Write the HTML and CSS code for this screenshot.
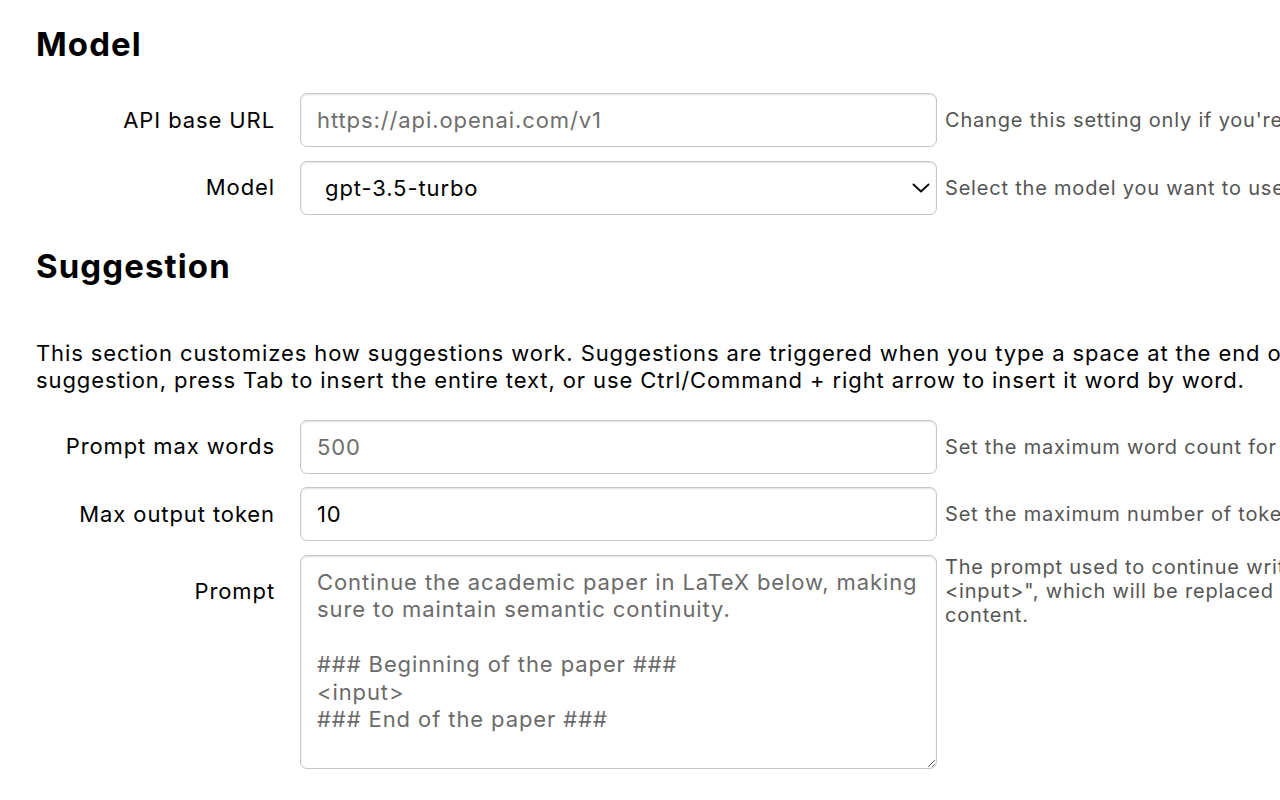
FILE: index.html
```html
<!DOCTYPE html>
<html lang="en">
<head>
<meta charset="utf-8">
<title>Settings</title>
<link rel="stylesheet" href="styles.css">
</head>
<body>
<main class="page">
  <section class="section">
    <h2 class="section-title">Model</h2>
    <div class="fields">
      <div class="field-row">
        <label class="field-label" for="api-base">API base URL</label>
        <input class="control" id="api-base" type="text" placeholder="https://api.openai.com/v1">
        <div class="field-help">Change this setting only if you're using a custom API endpoint.</div>
      </div>
      <div class="field-row">
        <label class="field-label" for="model">Model</label>
        <div class="select-wrap">
          <select class="control control-select" id="model">
            <option>gpt-3.5-turbo</option>
            <option>gpt-4</option>
          </select>
          <svg class="chevron" width="18" height="10" viewBox="0 0 18 10" aria-hidden="true"><path d="M1.5 1.5 L9 8.5 L16.5 1.5" fill="none" stroke="#111" stroke-width="2" stroke-linecap="round" stroke-linejoin="round"/></svg>
        </div>
        <div class="field-help">Select the model you want to use for suggestions.</div>
      </div>
    </div>
  </section>

  <section class="section">
    <h2 class="section-title section-title-second">Suggestion</h2>
    <p class="section-intro">This section customizes how suggestions work. Suggestions are triggered when you type a space at the end of a sentence. To accept a suggestion, press Tab to insert the entire text, or use Ctrl/Command + right arrow to insert it word by word.</p>
    <div class="fields">
      <div class="field-row">
        <label class="field-label" for="max-words">Prompt max words</label>
        <input class="control" id="max-words" type="text" placeholder="500">
        <div class="field-help">Set the maximum word count for suggestion prompts.</div>
      </div>
      <div class="field-row">
        <label class="field-label" for="max-token">Max output token</label>
        <input class="control" id="max-token" type="text" value="10">
        <div class="field-help">Set the maximum number of tokens to generate.</div>
      </div>
      <div class="field-row field-row-top">
        <label class="field-label field-label-top" for="prompt">Prompt</label>
        <textarea class="control control-area" id="prompt">Continue the academic paper in LaTeX below, making sure to maintain semantic continuity.

### Beginning of the paper ###
&lt;input&gt;
### End of the paper ###</textarea>
        <div class="field-help field-help-top">The prompt used to continue writing, with "<br>&lt;input&gt;", which will be replaced by the current<br>content.</div>
      </div>
    </div>
  </section>
</main>
</body>
</html>
```

FILE: styles.css
```css
html, body {
  margin: 0;
  padding: 0;
  background: #ffffff;
  overflow-x: hidden;
}

body {
  font-family: Inter, "Noto Sans", "Liberation Sans", sans-serif;
  color: #000000;
  font-size: 22px;
  letter-spacing: 0.9px;
}

.page {
  padding: 0 36px;
  width: 1800px;
}

.section-title {
  font-size: 33px;
  font-weight: 700;
  line-height: 38px;
  margin: 25px 0 0 0;
  letter-spacing: 1.1px;
}

.section-title-second {
  margin-top: 32px;
}

.section-intro {
  margin: 55px 0 0 0;
  line-height: 27px;
  width: 1540px;
  font-size: 22px;
}

.fields {
  display: flex;
  flex-direction: column;
  gap: 13.5px;
  margin-top: 30px;
}

.section-intro + .fields {
  margin-top: 26px;
}

.field-row {
  display: grid;
  grid-template-columns: 239px 637px max-content;
  column-gap: 25px;
  align-items: center;
}

.field-label {
  text-align: right;
  font-size: 22px;
  line-height: 27px;
}

.field-label-top {
  align-self: start;
  padding-top: 23px;
}

.control {
  box-sizing: border-box;
  width: 637px;
  height: 54px;
  margin: 0;
  border: 1.5px solid #c6c6c6;
  border-radius: 7px;
  background: #ffffff;
  box-shadow: inset 0 1px 2px rgba(0, 0, 0, 0.12);
  font-family: inherit;
  font-size: 22px;
  letter-spacing: 0.9px;
  color: #000000;
  padding: 0 16px;
  outline: none;
}

.control::placeholder {
  color: #6e6e6e;
  opacity: 1;
}

.select-wrap {
  position: relative;
  width: 637px;
}

.control-select {
  appearance: none;
  -webkit-appearance: none;
  padding-left: 24px;
}

.chevron {
  position: absolute;
  right: 7px;
  top: 22px;
}

.control-area {
  height: 214px;
  padding: 13px 10px 12px 16px;
  line-height: 27.5px;
  color: #6b6b6b;
  resize: vertical;
}

.field-help {
  margin-left: -17px;
  font-size: 20px;
  line-height: 24px;
  letter-spacing: 0.8px;
  color: #555555;
  white-space: nowrap;
}

.field-help-top {
  align-self: start;
  padding-top: 0;
}
```
